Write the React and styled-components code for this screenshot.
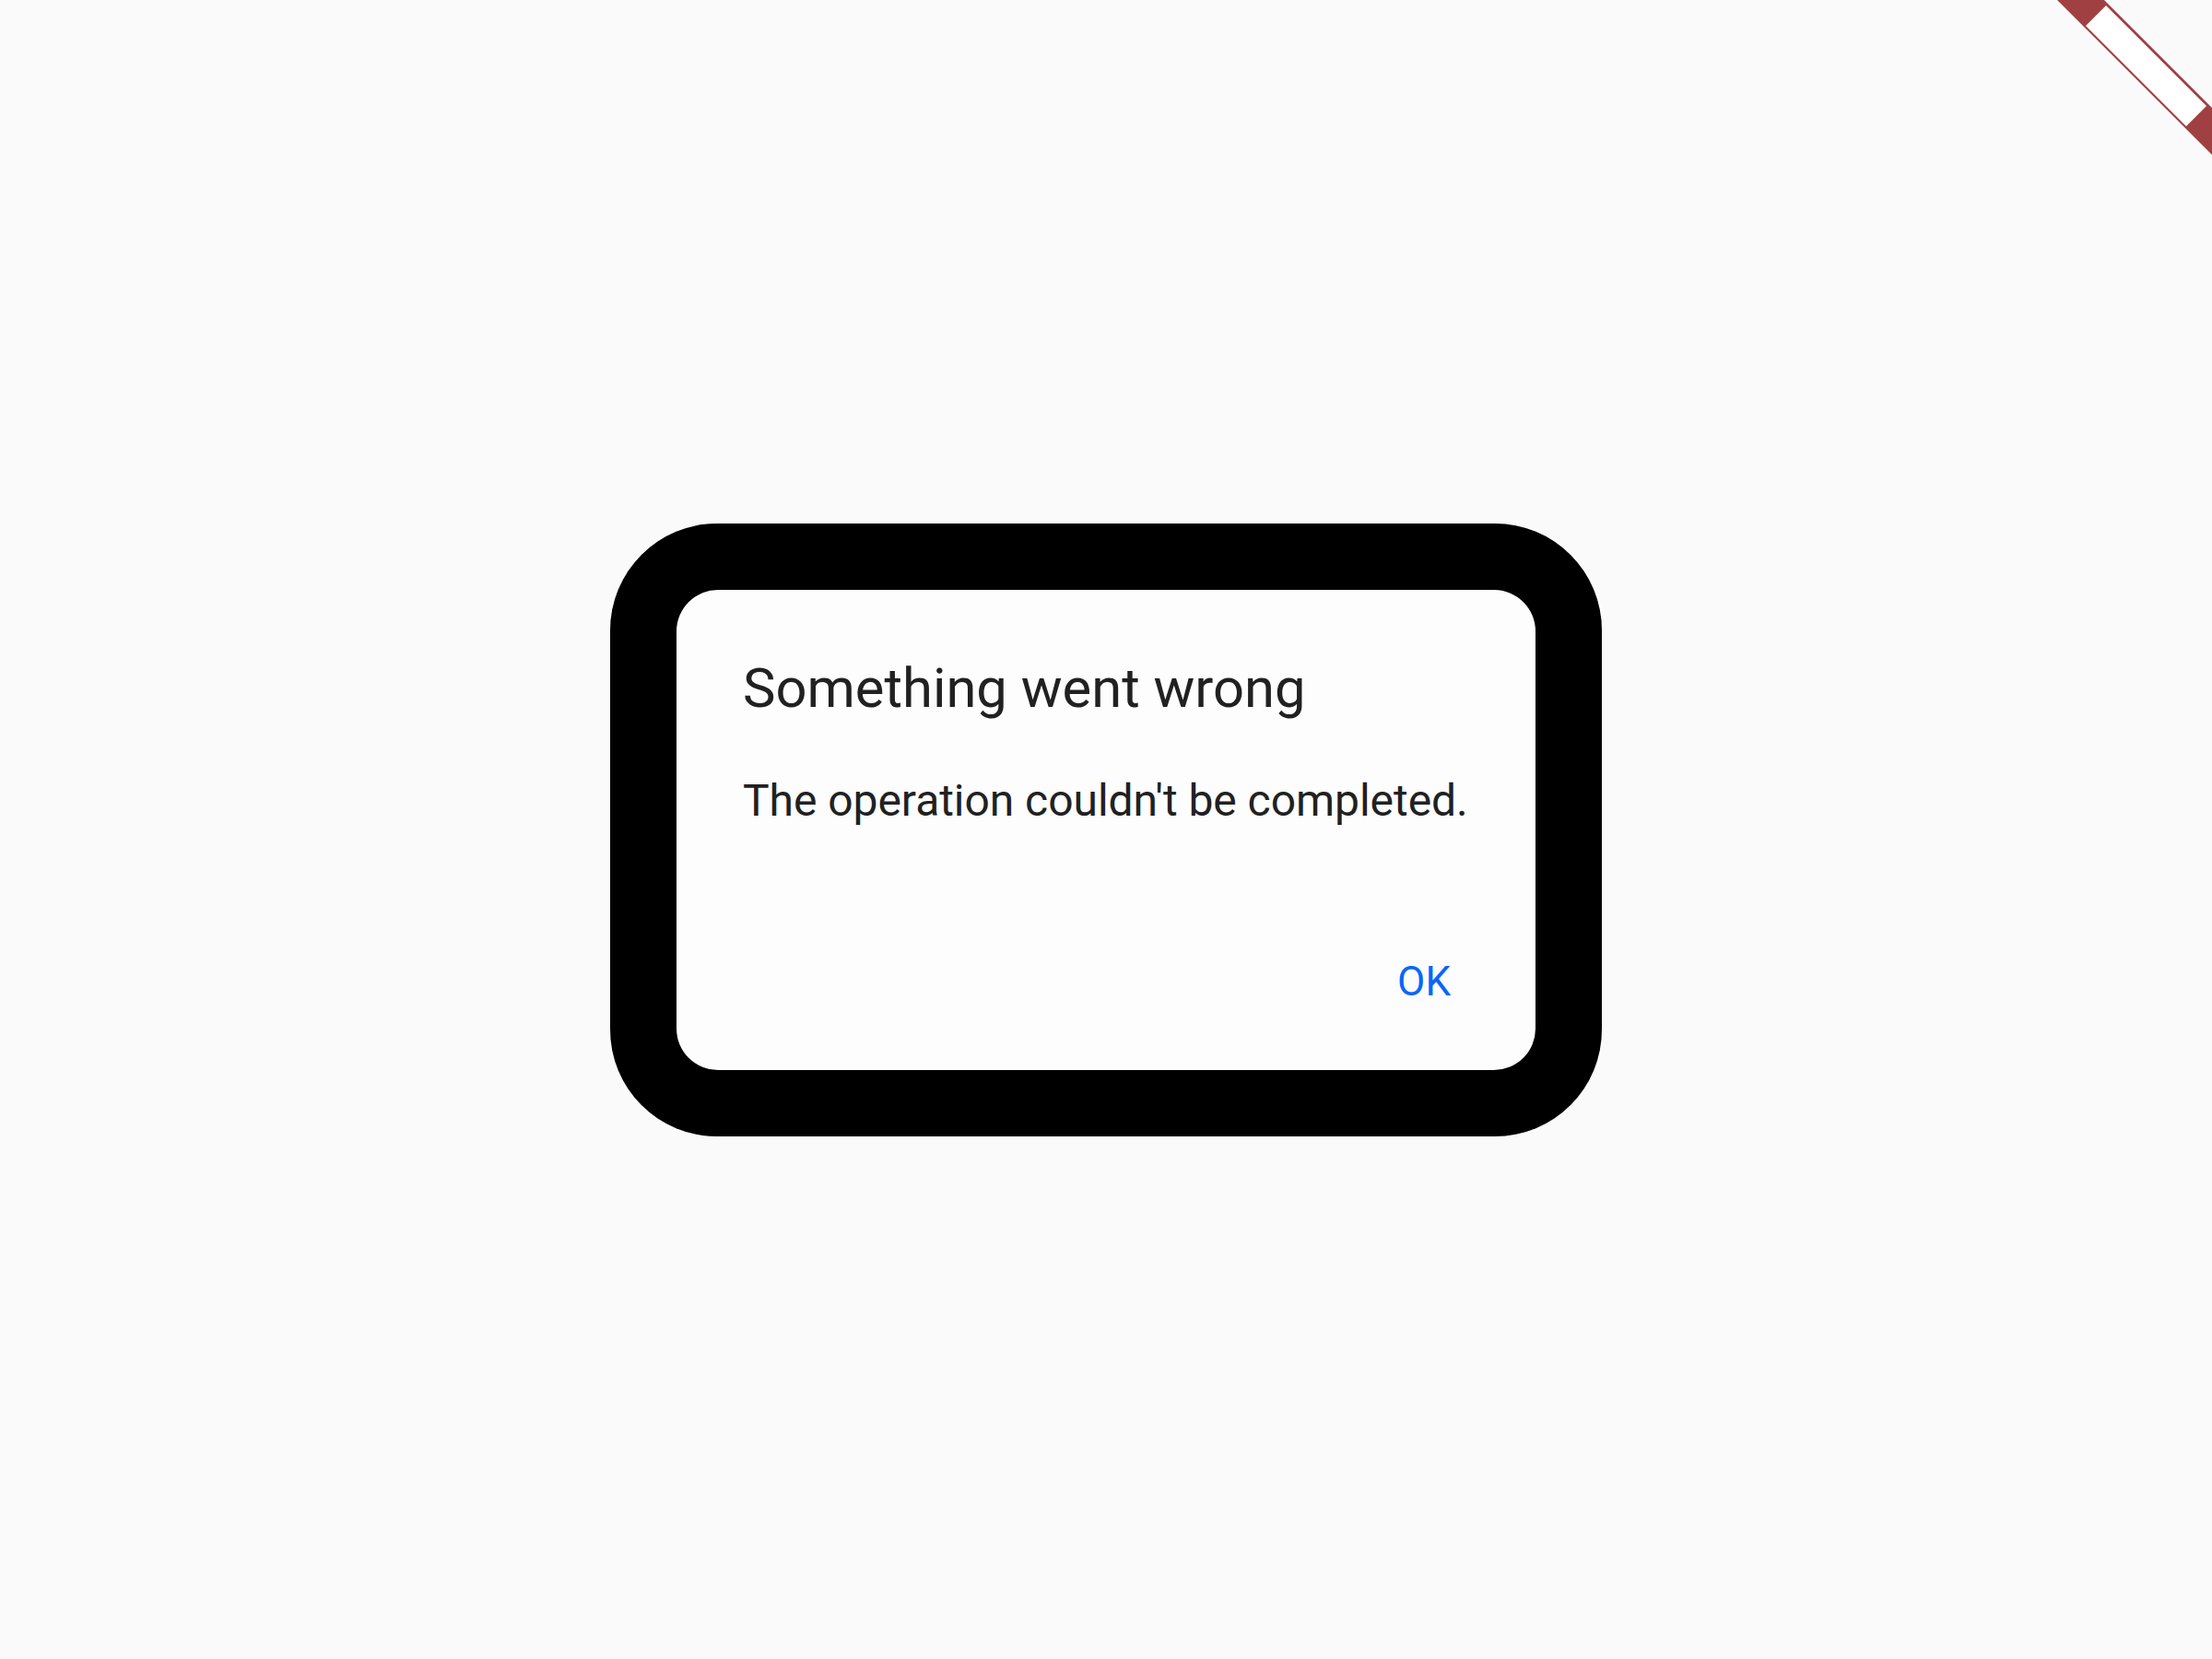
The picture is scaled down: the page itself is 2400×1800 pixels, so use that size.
import styled, { createGlobalStyle } from 'styled-components';

const GlobalStyle = createGlobalStyle`
  html, body {
    margin: 0;
    padding: 0;
    background: #fafafa;
    font-family: Roboto, "Liberation Sans", sans-serif;
  }
`;

const Screen = styled.div`
  position: relative;
  width: 100vw;
  height: 100vh;
  display: flex;
  align-items: center;
  justify-content: center;
  overflow: hidden;
`;

// thick black outline around the dialog
const Frame = styled.div`
  box-sizing: border-box;
  width: 1076px;
  height: 665px;
  padding: 72px;
  border-radius: 116px;
  background: #000;
  display: flex;
`;

const Dialog = styled.div`
  flex: 1;
  border-radius: 45px;
  background: #fdfdfd;
  display: flex;
  flex-direction: column;
  padding: 73px 0 0 72px;
`;

const Title = styled.h2`
  margin: 0;
  font-size: 59.7px;
  line-height: 68px;
  font-weight: 400;
  color: #212121;
`;

const Message = styled.p`
  margin: 60px 0 0;
  font-size: 48px;
  line-height: 56px;
  font-weight: 400;
  letter-spacing: -0.05px;
  color: #212121;
`;

const Actions = styled.div`
  display: flex;
  justify-content: flex-end;
  margin-top: 142px;
  padding-right: 76px;
`;

const TextButton = styled.button`
  border: none;
  background: none;
  padding: 0 16px;
  font-family: inherit;
  font-size: 44px;
  line-height: 52px;
  font-weight: 400;
  color: #0a66f8;
  cursor: pointer;
`;

const Banner = styled.svg`
  position: absolute;
  top: 0;
  right: 0;
  width: 200px;
  height: 170px;
`;

export default function App() {
  return (
    <>
      <GlobalStyle />
      <Screen>
        <Frame>
          <Dialog role="alertdialog">
            <Title>Something went wrong</Title>
            <Message>The operation couldn't be completed.</Message>
            <Actions>
              <TextButton>OK</TextButton>
            </Actions>
          </Dialog>
        </Frame>
        <Banner viewBox="0 0 200 170">
          <polygon points="32,0 83,0 200,117 200,168" fill="#a04042" />
          <polygon points="63,28 85,6 194,115 172,137" fill="#ffffff" />
        </Banner>
      </Screen>
    </>
  );
}
